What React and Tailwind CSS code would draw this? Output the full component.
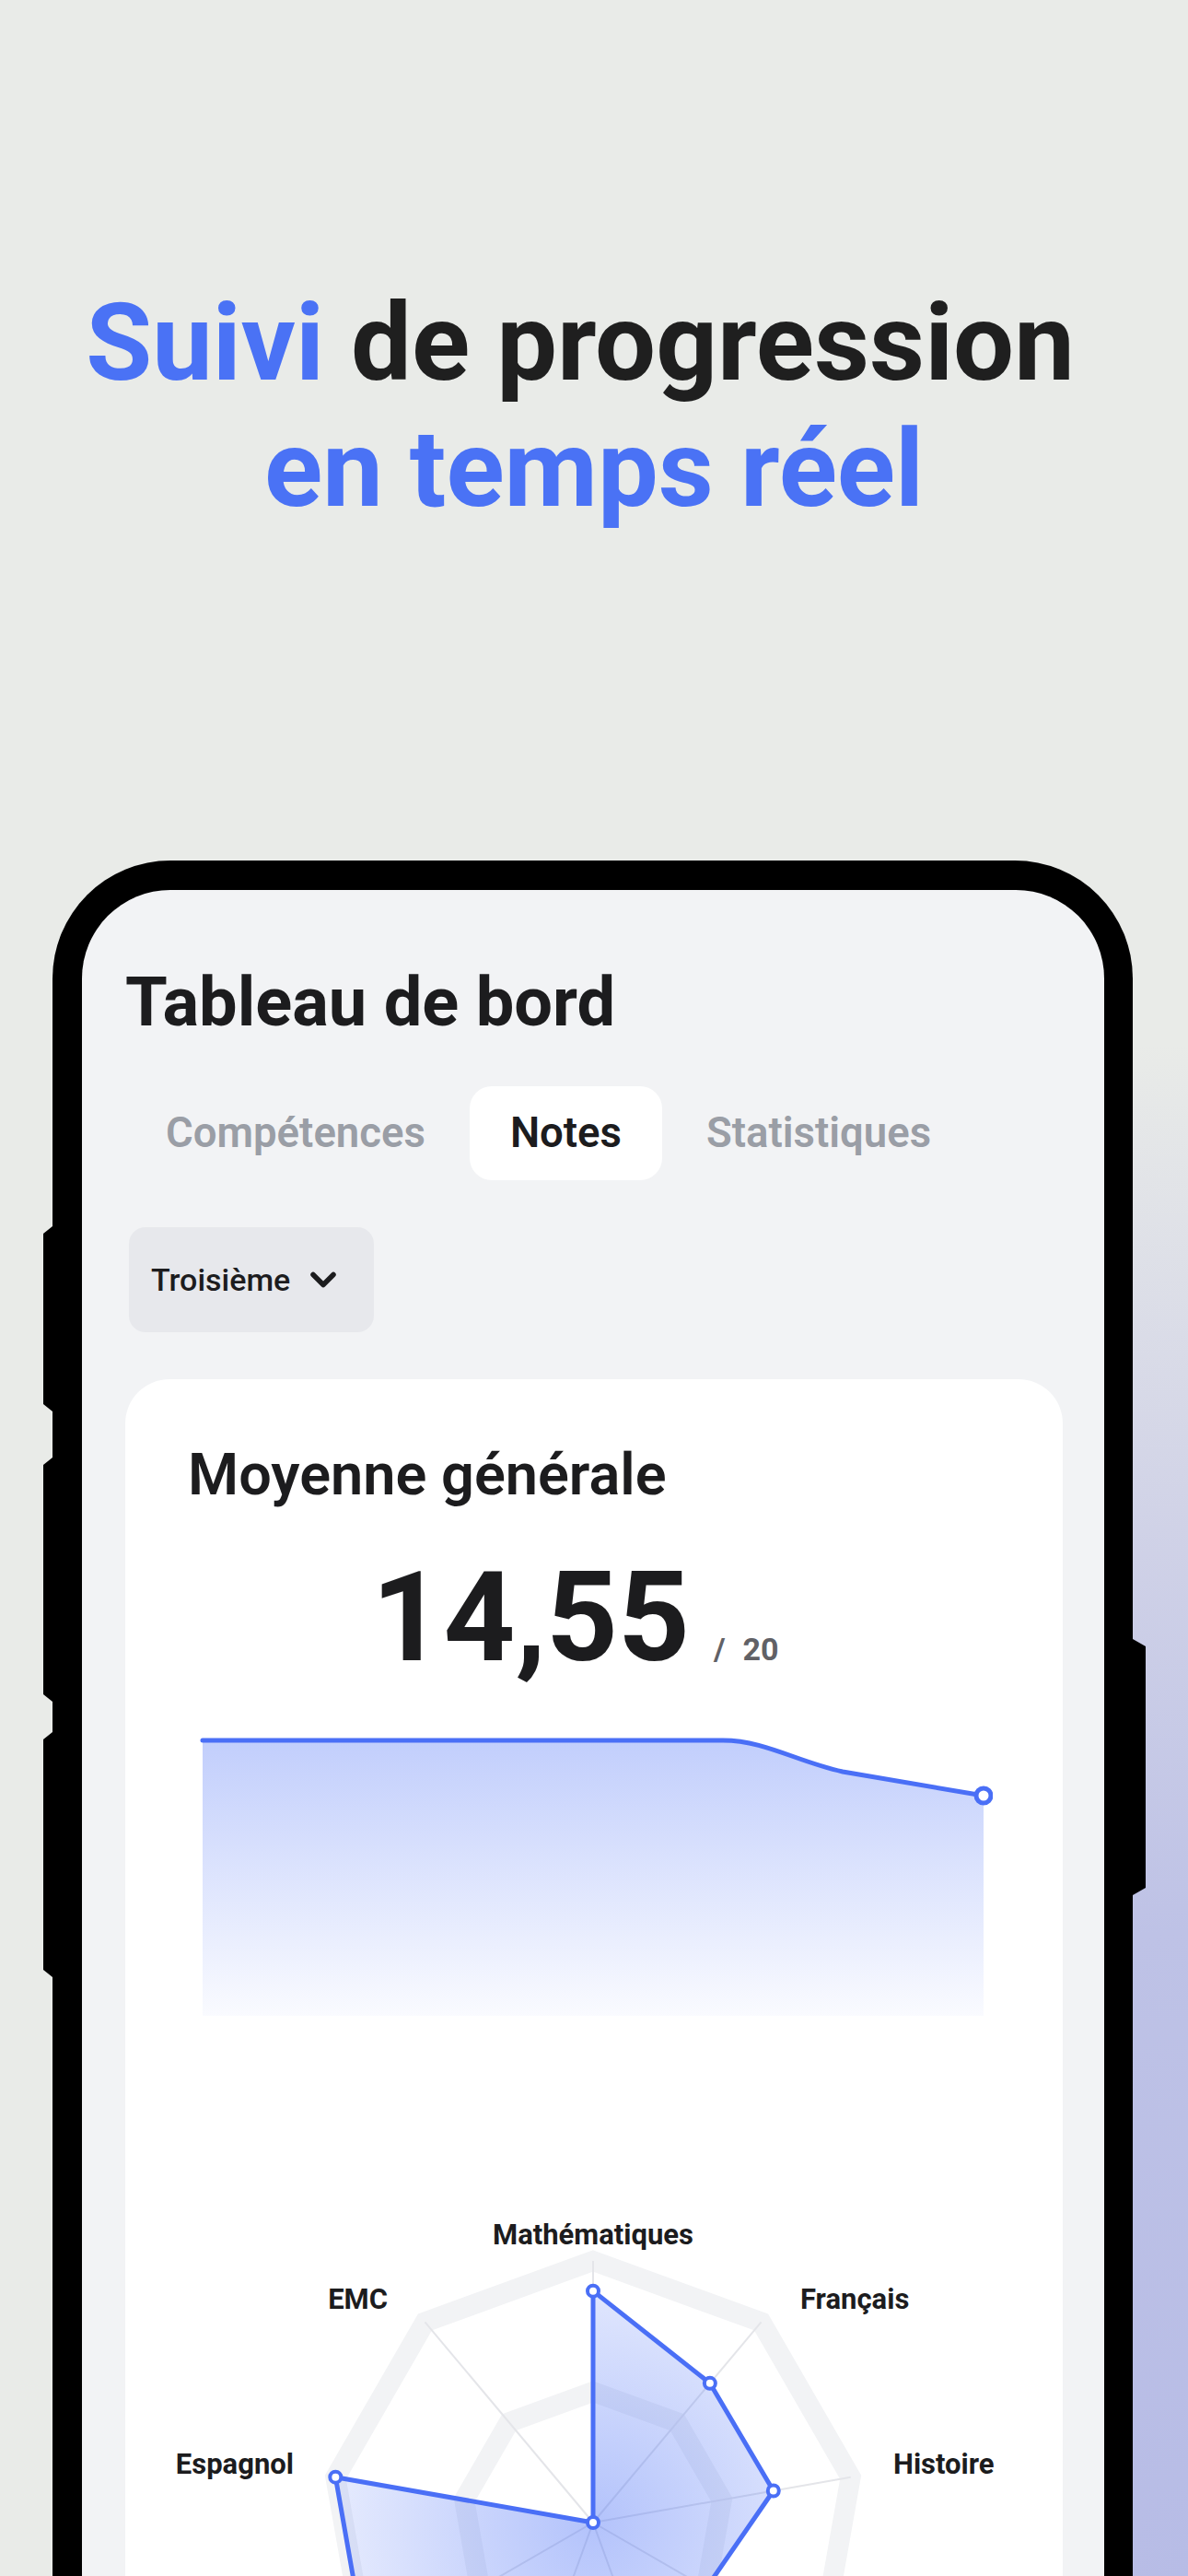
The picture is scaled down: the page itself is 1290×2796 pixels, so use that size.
import { ChevronDown } from 'lucide-react';

// Radar data: value on 20, one axis per subject (clockwise from top)
const subjects = [
  { name: 'Mathématiques', value: 17.7 },
  { name: 'Français', value: 13.9 },
  { name: 'Histoire', value: 14 },
  { name: 'Anglais', value: 10 },
  { name: 'SVT', value: 12 },
  { name: 'Physique-Chimie', value: 11 },
  { name: 'Géographie', value: 20 },
  { name: 'Espagnol', value: 20 },
  { name: 'EMC', value: 0 },
];

const CX = 508;
const CY = 388;
const R = 284;

const point = (i, r) => {
  const a = (i * 40 * Math.PI) / 180;
  return [CX + r * Math.sin(a), CY - r * Math.cos(a)];
};

const ring = (r) => subjects.map((_, i) => point(i, r).join(',')).join(' ');

const Tab = ({ label, active }) => (
  <div
    className={`h-[102px] px-[44px] rounded-[24px] flex items-center text-[45.5px] font-semibold ${
      active ? 'bg-white text-[#1c1c1e]' : 'text-[#9a9ea6]'
    }`}
  >
    {label}
  </div>
);

const SideButton = ({ className }) => (
  <div className={`absolute bg-black ${className}`} />
);

function AverageChart() {
  return (
    <svg width="868" height="330" viewBox="0 0 868 330" className="ml-[4px] mt-[34px] block">
      <defs>
        <linearGradient id="area" x1="0" y1="0" x2="0" y2="1">
          <stop offset="0%" stopColor="#4a6ff6" stopOpacity="0.34" />
          <stop offset="100%" stopColor="#4a6ff6" stopOpacity="0.03" />
        </linearGradient>
      </defs>
      <path
        d="M10 19 H575 C620 19 655 42 705 53 L858 79 V318 H10 Z"
        fill="url(#area)"
      />
      <path
        d="M10 19 H575 C620 19 655 42 705 53 L858 79"
        fill="none"
        stroke="#4a6ff6"
        strokeWidth="5"
        strokeLinecap="round"
      />
      <circle cx="858" cy="79" r="8" fill="white" stroke="#4a6ff6" strokeWidth="5" />
    </svg>
  );
}

function SubjectRadar() {
  const pts = subjects.map((s, i) => point(i, (s.value / 20) * R));
  return (
    <svg width="1018" height="520" viewBox="0 0 1018 520" className="-ml-[70px] mt-[150px] block">
      <defs>
        <radialGradient id="radarFill" cx={CX} cy={CY} r={R} gradientUnits="userSpaceOnUse">
          <stop offset="0%" stopColor="#4a6ff6" stopOpacity="0.42" />
          <stop offset="100%" stopColor="#4a6ff6" stopOpacity="0.14" />
        </radialGradient>
      </defs>
      <polygon points={ring(R)} fill="none" stroke="#f2f3f5" strokeWidth="22" />
      <polygon points={ring(R / 2)} fill="none" stroke="#f2f3f5" strokeWidth="22" />
      {subjects.map((_, i) => {
        const [x, y] = point(i, R);
        return <line key={i} x1={CX} y1={CY} x2={x} y2={y} stroke="#e4e5e9" strokeWidth="2" />;
      })}
      <polygon
        points={pts.map((p) => p.join(',')).join(' ')}
        fill="url(#radarFill)"
        stroke="#4a6ff6"
        strokeWidth="5"
        strokeLinejoin="round"
      />
      {pts.map(([x, y], i) => (
        <circle key={i} cx={x} cy={y} r="6" fill="white" stroke="#4a6ff6" strokeWidth="4" />
      ))}
      <g fontSize="31" fontWeight="700" fill="#1c1c1e" fontFamily="Roboto, sans-serif">
        <text x="508" y="86" textAnchor="middle">Mathématiques</text>
        <text x="733" y="156">Français</text>
        <text x="834" y="335">Histoire</text>
        <text x="285" y="156" textAnchor="end">EMC</text>
        <text x="183" y="335" textAnchor="end">Espagnol</text>
      </g>
    </svg>
  );
}

export default function App() {
  return (
    <div className="w-[1290px] h-[2796px] overflow-hidden font-['Roboto',sans-serif] bg-[#e9ebe8] bg-[radial-gradient(ellipse_1150px_1750px_at_100%_100%,#b7bce6_0%,#bec2e6_40%,#d0d2e7_65%,#e9ebe8_95%)]">
      {/* Headline */}
      <h1 className="pt-[304px] text-center text-[117px] leading-[137px] font-bold text-[#1f1f1f]">
        <span className="block pr-[30px]">
          <span className="text-[#4a72f5]">Suivi</span> de progression
        </span>
        <span className="block text-[#4a72f5]">en temps réel</span>
      </h1>

      {/* Phone */}
      <div className="relative mt-[356px] ml-[57px] w-[1173px] bg-black rounded-t-[128px] pt-[32px] pl-[32px] pr-[31px]">
        <SideButton className="-left-[10px] top-[397px] w-[10px] h-[201px] [clip-path:polygon(0_8px,100%_0,100%_100%,0_calc(100%-8px))]" />
        <SideButton className="-left-[10px] top-[648px] w-[10px] h-[265px] [clip-path:polygon(0_8px,100%_0,100%_100%,0_calc(100%-8px))]" />
        <SideButton className="-left-[10px] top-[946px] w-[10px] h-[266px] [clip-path:polygon(0_8px,100%_0,100%_100%,0_calc(100%-8px))]" />
        <SideButton className="-right-[14px] top-[845px] w-[14px] h-[278px] [clip-path:polygon(0_0,100%_8px,100%_calc(100%-8px),0_100%)]" />

        <div className="bg-[#f2f3f5] rounded-t-[96px] pl-[47px] pr-[45px] pt-[79px] min-h-[1900px]">
          <h2 className="text-[74px] leading-[86px] font-bold text-[#1c1c1e]">Tableau de bord</h2>

          <div className="mt-[48px] flex gap-[4px]">
            <Tab label="Compétences" />
            <Tab label="Notes" active />
            <Tab label="Statistiques" />
          </div>

          <div className="mt-[51px] ml-[4px] w-[266px] h-[114px] rounded-[18px] bg-[#e7e8ec] pl-[24px] flex items-center text-[34px] font-medium text-[#1c1c1e]">
            Troisième
            <ChevronDown className="ml-[14px] w-[44px] h-[44px]" strokeWidth={3} />
          </div>

          <div className="mt-[51px] bg-white rounded-[48px] pt-[68px] pl-[68px] pr-[70px] pb-[200px]">
            <h3 className="text-[63px] leading-[72px] font-semibold text-[#1c1c1e]">Moyenne générale</h3>
            <div className="mt-[39px] flex items-baseline justify-center pr-[39px]">
              <span className="text-[136px] leading-[160px] font-bold text-[#1c1c1e]">14,55</span>
              <span className="ml-[26px] text-[34px] font-bold text-[#616166]">/</span>
              <span className="ml-[19px] text-[34px] font-bold text-[#616166]">20</span>
            </div>
            <div className="ml-[2px]">
              <AverageChart />
              <SubjectRadar />
            </div>
          </div>
        </div>
      </div>
    </div>
  );
}
